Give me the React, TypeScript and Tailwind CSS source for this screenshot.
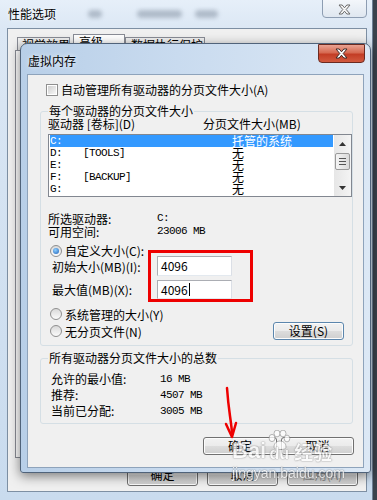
import React from 'react';

const cn = "font-['Noto_Sans_CJK_SC',sans-serif] text-[12px] text-black";
const mono = "font-['Liberation_Mono',monospace] text-[11px] tracking-[-0.6px] text-black";
const btn =
  "flex items-center justify-center border border-[#707070] rounded-[3px] bg-[linear-gradient(#f2f2f2_0%,#ebebeb_50%,#dddddd_51%,#cfcfcf_100%)] shadow-[inset_0_0_0_1px_#fcfcfc]";

function CloseX({ fill, stroke }: { fill: string; stroke: string }) {
  return (
    <svg width="13" height="11" viewBox="0 0 13 11">
      <path
        d="M1 1h3.2l2.3 2.8L8.8 1H12L8.2 5.5 12 10H8.8L6.5 7.2 4.2 10H1l3.8-4.5z"
        fill={fill}
        stroke={stroke}
        strokeWidth="1"
        strokeLinejoin="round"
      />
    </svg>
  );
}

function Radio({ checked }: { checked?: boolean }) {
  return (
    <div className="w-[12px] h-[12px] rounded-full border border-[#8f8f8f] bg-[linear-gradient(#d9d9d9,#fbfbfb)] flex items-center justify-center shrink-0">
      {checked && (
        <div className="w-[6px] h-[6px] rounded-full bg-[radial-gradient(circle_at_40%_35%,#8fd0ff,#1c5fb8)]" />
      )}
    </div>
  );
}

const drives = [
  { d: 'C:', l: '', s: '托管的系统', sel: true },
  { d: 'D:', l: '[TOOLS]', s: '无' },
  { d: 'E:', l: '', s: '无' },
  { d: 'F:', l: '[BACKUP]', s: '无' },
  { d: 'G:', l: '', s: '无' },
];

export default function App() {
  return (
    <div className="relative w-[377px] h-[500px] overflow-hidden bg-[linear-gradient(90deg,#c8d6e4_0%,#c8d6e4_97%,#3a424c_98%,#3a424c_100%)]">
      {/* 性能选项 (behind) */}
      <div className="absolute left-0 top-0 w-[373px] h-[500px] bg-[linear-gradient(180deg,#e6eff9_0%,#dbe7f4_6%,#c9dbee_100%)] border-r border-[#6f8196]">
        <div className="h-[28px] flex items-center pl-[8px] relative">
          <span className={`${cn} leading-[14px] [text-shadow:0_0_4px_#fff]`}>性能选项</span>
          <span className="ml-[32px] w-[14px] h-[8px] rounded bg-[#8e9bab] blur-[2px] opacity-60" />
          <span className="ml-[35px] w-[45px] h-[8px] rounded bg-[#8e9bab] blur-[2px] opacity-60" />
          <span className="ml-[13px] w-[23px] h-[8px] rounded bg-[#8e9bab] blur-[2px] opacity-60" />
          <div className="absolute left-[322px] -top-[2px] w-[45px] h-[20px] rounded-b-[4px] border border-[#8d9db2] bg-[linear-gradient(#f4f7fb,#dfe7f0)] flex items-center justify-center pt-[2px]">
            <CloseX fill="#f7f7f7" stroke="#6a6a6a" />
          </div>
        </div>
        <div className="ml-[7px] w-[360px] h-[464px] border border-[#7d8fa3] bg-[#f0f0f0] flex flex-col">
          <div className="mt-[5px] ml-[9px] flex items-end h-[16px]">
            <div className={`w-[53px] h-[13px] border border-b-0 border-[#898c95] bg-[linear-gradient(#f2f2f2,#e3e3e3)] pl-[4px] ${cn} leading-[13px] whitespace-nowrap overflow-hidden`}>视觉效果</div>
            <div className={`ml-[3px] w-[52px] h-[16px] border border-b-0 border-[#898c95] bg-white pl-[5px] ${cn} leading-[14px]`}>高级</div>
            <div className={`w-[80px] h-[13px] border border-b-0 border-[#898c95] bg-[linear-gradient(#f2f2f2,#e3e3e3)] pl-[5px] ${cn} leading-[13px]`}>数据执行保护</div>
          </div>
          <div className="ml-[7px] w-[345px] h-[408px] border border-[#898c95] bg-white" />
          <div className="mt-[5px] flex justify-end gap-[9px] pr-[8px]">
            <div className={`${btn} w-[71px] h-[23px] ${cn}`}>确定</div>
            <div className={`${btn} w-[71px] h-[23px] ${cn}`}>取消</div>
            <div className={`${btn} w-[71px] h-[23px] ${cn} !text-[#8d8d8d]`}>应用(A)</div>
          </div>
        </div>
      </div>

      {/* 虚拟内存 dialog */}
      <div className="absolute left-[20px] top-[43px] w-[351px] h-[430px] rounded-t-[7px] rounded-b-[3px] border border-[#50637a] bg-[linear-gradient(90deg,#b8cfe8_0%,#c9dbef_45%,#dce8f5_100%)] shadow-[0_3px_12px_rgba(0,0,0,0.5)] flex flex-col">
        <div className="h-[30px] flex items-center pl-[7px] pt-[3px] relative">
          <span className={`${cn} leading-[14px] [text-shadow:0_0_5px_#fff]`}>虚拟内存</span>
          <div className="absolute left-[297px] top-0 w-[47px] h-[19px] rounded-b-[4px] border border-[#6b2a20] bg-[linear-gradient(#eaa392_0%,#d66a52_45%,#c33d25_55%,#d25a3f_100%)] flex items-center justify-center">
            <CloseX fill="#ffffff" stroke="#3c2a28" />
          </div>
        </div>
        <div className="ml-[6px] w-[337px] h-[394px] border border-[#8ea3bb] bg-[#f0f0f0] flex flex-col">
          {/* checkbox */}
          <div className="mt-[8px] ml-[18px] h-[13px] flex items-center gap-[3px]">
            <div className="w-[12px] h-[12px] border border-[#8f8f8f] bg-white p-[1px]">
              <div className="w-full h-full bg-[linear-gradient(135deg,#cfcfcf,#f7f7f7)]" />
            </div>
            <span className={`${cn} leading-[13px]`}>自动管理所有驱动器的分页文件大小(A)</span>
          </div>

          {/* group 1 */}
          <div className="mt-[15px] ml-[12px] w-[313px] h-[235px] border border-[#d5dfe5] rounded-[3px] relative flex flex-col">
            <span className={`absolute left-[7px] -top-[8px] px-[1px] bg-[#f0f0f0] ${cn} leading-[14px]`}>每个驱动器的分页文件大小</span>
            <div className="mt-[5px] h-[14px] pl-[7px] flex">
              <span className={`w-[155px] ${cn} leading-[14px]`}>驱动器 [卷标](D)</span>
              <span className={`${cn} leading-[14px]`}>分页文件大小(MB)</span>
            </div>
            <div className="mt-[3px] ml-[7px] w-[304px] h-[63px] border border-[#828790] bg-white flex">
              <div className="flex-1 px-[1px] flex flex-col">
                {drives.map((r) => (
                  <div
                    key={r.d}
                    className={`h-[12px] flex items-center ${r.sel ? 'bg-[#3399ff]' : ''}`}
                  >
                    <span className={`w-[33px] ${mono} leading-[12px] ${r.sel ? '!text-white' : ''}`}>{r.d}</span>
                    <span className={`w-[149px] ${mono} leading-[12px]`}>{r.l}</span>
                    <span className={`${cn} leading-[12px] ${r.sel ? '!text-white' : ''}`}>{r.s}</span>
                  </div>
                ))}
              </div>
              <div className="w-[17px] bg-[linear-gradient(90deg,#e6e6e6,#f4f4f4)] flex flex-col items-center">
                <div className="h-[17px] flex items-center justify-center">
                  <svg width="7" height="4" viewBox="0 0 7 4"><path d="M0 4L3.5 0 7 4z" fill="#333" /></svg>
                </div>
                <div className="mt-[1px] w-[15px] h-[17px] border border-[#9a9a9a] rounded-[2px] bg-[linear-gradient(90deg,#f4f4f4,#dadada)] flex flex-col items-center justify-center gap-[2px]">
                  <div className="w-[7px] h-[1px] bg-[#555]" />
                  <div className="w-[7px] h-[1px] bg-[#555]" />
                  <div className="w-[7px] h-[1px] bg-[#555]" />
                </div>
                <div className="mt-auto h-[17px] flex items-center justify-center">
                  <svg width="7" height="4" viewBox="0 0 7 4"><path d="M0 0L3.5 4 7 0z" fill="#333" /></svg>
                </div>
              </div>
            </div>

            <div className="mt-[15px] pl-[7px] flex h-[13px] items-center">
              <span className={`w-[109px] ${cn} leading-[13px]`}>所选驱动器:</span>
              <span className={mono}>C:</span>
            </div>
            <div className="pl-[7px] flex h-[13px] items-center">
              <span className={`w-[109px] ${cn} leading-[13px]`}>可用空间:</span>
              <span className={mono}>23006 MB</span>
            </div>

            <div className="mt-[7px] pl-[9px] h-[11px] flex items-center gap-[3px]">
              <Radio checked />
              <span className={`${cn} leading-[13px]`}>自定义大小(C):</span>
            </div>
            <div className="pl-[11px] h-[20px] flex items-center">
              <span className={`w-[105px] ${cn} leading-[13px]`}>初始大小(MB)(I):</span>
              <div className={`w-[75px] h-[20px] border border-[#abadb3] border-b-[#e3e9ef] border-r-[#dbdfe6] bg-white pl-[3px] flex items-center ${cn}`}>4096</div>
            </div>
            <div className="mt-[4px] pl-[11px] h-[19px] flex items-center">
              <span className={`w-[105px] ${cn} leading-[13px]`}>最大值(MB)(X):</span>
              <div className={`w-[75px] h-[19px] border border-[#abadb3] border-b-[#e3e9ef] border-r-[#dbdfe6] bg-white pl-[3px] flex items-center ${cn}`}>
                4096<span className="ml-[1px] w-[1px] h-[13px] bg-black" />
              </div>
            </div>
            <div className="mt-[9px] flex items-start">
              <div className="pl-[9px] flex flex-col gap-[5px]">
                <div className="h-[12px] flex items-center gap-[3px]">
                  <Radio />
                  <span className={`${cn} leading-[13px]`}>系统管理的大小(Y)</span>
                </div>
                <div className="h-[12px] flex items-center gap-[3px]">
                  <Radio />
                  <span className={`${cn} leading-[13px]`}>无分页文件(N)</span>
                </div>
              </div>
              <div className={`${btn} ml-auto mr-[8px] mt-[14px] w-[71px] h-[18px] !border-[#5b86ad] ${cn}`}>设置(S)</div>
            </div>
          </div>

          {/* group 2 */}
          <div className="mt-[12px] ml-[12px] w-[313px] h-[66px] border border-[#d5dfe5] rounded-[3px] relative flex flex-col">
            <span className={`absolute left-[7px] -top-[8px] px-[1px] bg-[#f0f0f0] ${cn} leading-[14px]`}>所有驱动器分页文件大小的总数</span>
            <div className="mt-[12px] pl-[10px] flex flex-col">
              {[
                ['允许的最小值:', '16 MB'],
                ['推荐:', '4507 MB'],
                ['当前已分配:', '3005 MB'],
              ].map(([k, v]) => (
                <div key={k} className="h-[16px] flex items-center">
                  <span className={`w-[109px] ${cn} leading-[14px]`}>{k}</span>
                  <span className={mono}>{v}</span>
                </div>
              ))}
            </div>
          </div>

          <div className="mt-[13px] flex justify-end gap-[4px] pr-[9px]">
            <div className={`${btn} w-[74px] h-[18px] ${cn}`}>确定</div>
            <div className={`${btn} w-[73px] h-[18px] ${cn}`}>取消</div>
          </div>
        </div>
      </div>

      {/* red annotation box */}
      <div className="absolute left-[148px] top-[250px] w-[105px] h-[52px] border-[3px] border-[#ee0000]" />

      {/* red arrow */}
      <svg className="absolute left-0 top-0 pointer-events-none" width="377" height="500" viewBox="0 0 377 500">
        <path d="M227 388 Q228 402 230 416 T232 434" fill="none" stroke="#ee0000" strokeWidth="2.5" strokeLinecap="round" />
        <path d="M226 424 L232 437 L236 423" fill="none" stroke="#ee0000" strokeWidth="2.5" strokeLinecap="round" strokeLinejoin="round" />
      </svg>

      {/* watermark */}
      <div className="absolute left-[232px] top-[424px] w-[120px] flex flex-col pointer-events-none opacity-75">
        <div className="flex items-end h-[38px]">
          <span className="font-['Liberation_Sans',sans-serif] font-bold text-[22px] leading-[22px] text-white [text-shadow:0_0_1px_#666,0_0_2px_#999]">Bai</span>
          <div className="flex flex-col items-center w-[26px]">
            <svg width="24" height="20" viewBox="0 0 24 20">
              <g fill="#fff" stroke="#888" strokeWidth="0.8">
                <ellipse cx="5" cy="8" rx="3" ry="3.6" />
                <ellipse cx="10" cy="3.5" rx="3" ry="3.4" />
                <ellipse cx="16" cy="3.5" rx="3" ry="3.4" />
                <ellipse cx="20" cy="8.5" rx="2.8" ry="3.4" />
                <path d="M7 17c0-4 3-6 6-6s6 2 6 6c0 2-2 2.5-6 2.5s-6-.5-6-2.5z" />
              </g>
            </svg>
            <span className="-mt-[4px] font-['Liberation_Sans',sans-serif] font-bold text-[16px] leading-[16px] text-white [text-shadow:0_0_1px_#666,0_0_2px_#999]">du</span>
          </div>
          <span className="ml-[2px] font-['Noto_Sans_CJK_SC',sans-serif] font-bold text-[19px] leading-[20px] text-white [text-shadow:0_0_1px_#666,0_0_2px_#999]">经验</span>
        </div>
        <span className="mt-[3px] font-['Liberation_Sans',sans-serif] text-[14px] leading-[16px] text-white [text-shadow:0_0_1px_#555,0_0_2px_#888]">jingyan.baidu.com</span>
      </div>
    </div>
  );
}
